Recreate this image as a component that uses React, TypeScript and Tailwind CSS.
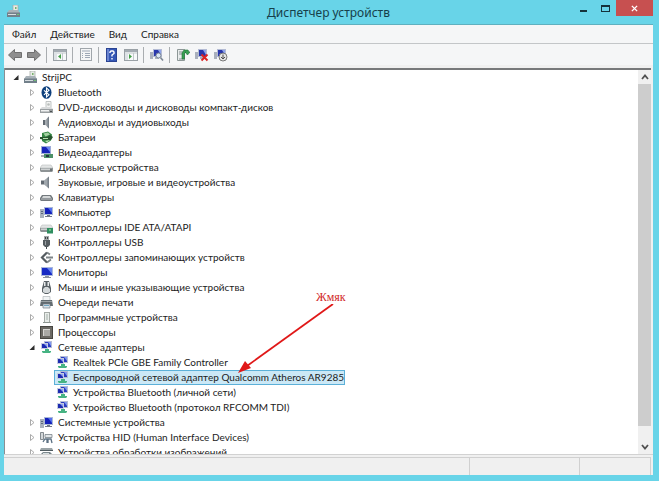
import React from "react";

type Kind =
  | "pc" | "bluetooth" | "optical" | "audio" | "battery" | "display" | "disk" | "speaker"
  | "keyboard" | "computer" | "ide" | "usb" | "storage" | "monitor" | "mouse" | "printer"
  | "software" | "cpu" | "network" | "hid" | "imaging";

function Drawing({ kind }: { kind: Kind }) {
  switch (kind) {
    case "pc":
      return (
        <g>
          <path d="M6 0h5v6H6z" fill="#e6ebe6" stroke="#a0a8a2" strokeWidth=".7" />
          <path d="M8 2h1.500v2H8z" fill="#79b06c" />
          <path d="M2 5h9l2 3H0z" fill="#a9b2b8" />
          <path d="M0 7.500h13V12H0z" fill="#72808a" />
          <path d="M1 9h8v1H1z" fill="#d7dde0" />
          <path d="M10 9h2v1h-2z" fill="#6fc373" />
        </g>
      );
    case "bluetooth":
      return (
        <g>
          <ellipse cx="6.500" cy="6.500" rx="5" ry="6.300" fill="#0d3f7c" />
          <path d="M4 4.300l5 4.500-2.500 2.200V2L9 4.200 4 8.800" fill="none" stroke="#fff" strokeWidth="1.100" />
        </g>
      );
    case "optical":
      return (
        <g>
          <path d="M6 .5h5v6H6z" fill="#f2f3f2" stroke="#b3b7b8" strokeWidth=".8" />
          <circle cx="8.500" cy="3.500" r="1.300" fill="#b9bdbb" />
          <path d="M2 6h9l2 2H0z" fill="#d8dadb" />
          <path d="M0 8h13v4H0z" fill="#9a9fa1" />
          <path d="M1 9h8v1.500H1z" fill="#f0f1f1" />
          <path d="M10 10h2v1h-2z" fill="#4b5152" />
        </g>
      );
    case "audio":
    case "speaker":
      return (
        <g>
          <path d={kind === "audio" ? "M3 4h2.500v5H3z" : "M1 4.500h3v4H1z"} fill="#626a72" />
          <path d={kind === "audio" ? "M5.500 4L9 .5v12L5.500 9z" : "M4 4.500L9 .5v12l-5-4z"} fill="#a0a7ad" />
          <path d="M7.500 2L9 .5v12L7.500 11z" fill="#78818a" />
        </g>
      );
    case "battery":
      return (
        <g>
          <path d="M2 2l6-1.500 4 3-1 6-5 3-4-2.500z" fill="#348844" />
          <path d="M3.500 2.500l4.500-1 2 2-4.500 2z" fill="#a5d0a2" />
          <path d="M0 6h7l3-2 3 2-2 3H6L0 8z" fill="#28552f" />
          <path d="M3 7h5v1H3zM5 10l5-1-3 2.500z" fill="#b7e0b1" />
        </g>
      );
    case "display":
      return (
        <g>
          <rect x="1" y="0" width="10" height="8" fill="#9eabd6" />
          <rect x="2" y="1" width="8" height="6" fill="#1725b8" />
          <path d="M6 1h4v5z" fill="#6885ee" />
          <path d="M4 8h9v4H4z" fill="#4c9068" />
          <path d="M6 9h3v2H6z" fill="#263543" />
          <path d="M1 9h3v2H1z" fill="#a8adb5" />
        </g>
      );
    case "disk":
    case "ide":
      return (
        <g>
          <path d="M2 4h9l2 3H0z" fill="#e3e5e5" stroke="#b9bdbe" strokeWidth=".6" />
          <path d="M0 7h13v3l-1 1H1l-1-1z" fill="#8e9496" />
          <path d="M1 7.500h9V9H1z" fill="#cdd0d1" />
          {kind === "ide" ? <path d="M7 7h6v5.500H7z" fill="#2f8e60" /> : <path d="M10 8.500h2v1h-2z" fill="#4c5355" />}
          {kind === "ide" && <path d="M9 8h2v2H9z" fill="#6bbd82" />}
        </g>
      );
    case "keyboard":
      return (
        <g>
          <path d="M2 4h9l2 3v2l-1 1H1L0 9V7z" fill="#73797d" />
          <path d="M3 5h7l1 2H2z" fill="#d4d7d8" />
          <path d="M1 8h11" stroke="#b9bdc0" />
        </g>
      );
    case "computer":
      return (
        <g>
          <path d="M0 3h4v9H0z" fill="#aab2bd" />
          <path d="M1 5h2v1H1zM1 7h2v1H1z" fill="#5b6a80" />
          <rect x="4" y="1" width="9" height="8" fill="#aab8d7" />
          <rect x="5" y="2" width="7" height="6" fill="#1420ba" />
          <path d="M8 2h4v5z" fill="#536fec" />
          <path d="M7 9h3v1h2v1H5v-1h2z" fill="#717989" />
        </g>
      );
    case "usb":
      return (
        <g>
          <path d="M4 0h5v4H4z" fill="#a0a5a7" />
          <path d="M5 1h1v2H5zM7 1h1v2H7z" fill="#3e4344" />
          <path d="M3 4h7v5l-2 2H5L3 9z" fill="#555c60" />
          <path d="M5 5h1v4H5z" fill="#9ca2a5" />
          <path d="M6 11h1v2H6z" fill="#454c50" />
        </g>
      );
    case "storage":
      return (
        <g fill="none">
          <path d="M7 1.500l-5 5 5 5" stroke="#555c60" strokeWidth="2.200" />
          <path d="M7 1.500l3 2M7 11.500l4-3M6 6.500h7" stroke="#7d8487" strokeWidth="1.800" />
        </g>
      );
    case "monitor":
      return (
        <g>
          <rect x="1" y="1" width="12" height="9" fill="#aab7dc" />
          <rect x="2" y="2" width="10" height="7" fill="#172ac4" />
          <path d="M7 2h5v6z" fill="#6986ef" />
          <path d="M5 10h4v1h2v1H3v-1h2z" fill="#8b92a0" />
        </g>
      );
    case "mouse":
      return (
        <g>
          <path d="M4 0h5l2 7v4l-3 2H5l-3-2V7z" fill="#596166" />
          <path d="M5 6h3l2 2v3l-2 1H5l-2-1V8z" fill="#d3d8da" />
          <path d="M4 1h1.500v4H4zM7.500 1H9v4H7.500z" fill="#e6e9ea" />
        </g>
      );
    case "printer":
      return (
        <g>
          <path d="M3 .5h7V5H3z" fill="#f0f3f4" stroke="#a5abae" strokeWidth=".6" />
          <path d="M1 4h11l1 6H0z" fill="#626b70" />
          <path d="M1 5h11v1H1z" fill="#9aa1a4" />
          <path d="M3 8h7v4H3z" fill="#dbe4ea" stroke="#758087" strokeWidth=".7" />
          <path d="M4 9h5v1H4z" fill="#70a5c2" />
        </g>
      );
    case "software":
      return (
        <g>
          <rect x="4.500" y="1.500" width="5" height="10" fill="#e9edea" stroke="#a4aaa6" />
          <path d="M6.500 3h1v6h-1z" fill="#a4afa7" />
          <path d="M3 11h8v1H3z" fill="#8d9691" />
        </g>
      );
    case "cpu":
      return (
        <g>
          <rect x=".5" y=".5" width="12" height="12" fill="#6b6964" stroke="#474641" />
          <rect x="3" y="3" width="7" height="7" fill="#aaa9a5" />
          <path d="M3 3h7v1H4v6H3z" fill="#d6d5d1" />
        </g>
      );
    case "network":
      return (
        <g>
          <rect x="4.500" y=".5" width="7" height="6" fill="#2a3cc0" stroke="#b4bcd6" />
          <path d="M8 1h3v4z" fill="#7f97f0" />
          <rect x="1.500" y="2.500" width="6" height="5" fill="#1c2bb0" stroke="#c4cbe0" />
          <path d="M4 3h3v3z" fill="#8ea2f2" />
          <path d="M5 8h4v2h2v1l-1 1H3l-1-1v-1h3z" fill="#46b383" />
        </g>
      );
    case "hid":
      return (
        <g>
          <path d="M.5 1.500h3v7h-3z" fill="#d4d8da" stroke="#697277" strokeWidth=".8" />
          <path d="M5 3.500h7v3H5z" stroke="#7b848a" strokeWidth=".8" fill="#e3e7e9" />
          <path d="M3 11l2-3h2l0 4M8 12V8h3l1 4" fill="none" stroke="#5d7284" strokeWidth="1.300" />
        </g>
      );
    case "imaging":
      return (
        <g>
          <path d="M1 2h11l1 2H0z" fill="#9ba4a7" />
          <path d="M0 4h13v1H0z" fill="#4f5b60" />
          <path d="M3 6h7l3 3v3H0V9z" fill="#7b878c" />
          <path d="M3 7h6v2H3z" fill="#d7dfe1" />
        </g>
      );
  }
}

function Icon({ kind }: { kind: Kind }) {
  return (
    <svg className="size-[13px] shrink-0" viewBox="0 0 13 13" aria-hidden="true">
      <Drawing kind={kind} />
    </svg>
  );
}

function Toggle({ open, label }: { open: boolean; label: string }) {
  return (
    <button type="button" aria-expanded={open} aria-label={label} className="flex w-[11px] shrink-0 items-center">
      <svg className="h-[9px] w-[6px]" viewBox="0 0 6 9" aria-hidden="true">
        {open ? (
          <path d="M5.500 2v5H.5z" fill="#2c2c2c" />
        ) : (
          <path d="M1.500 1.500v6l3.500-3z" fill="#fff" stroke="#a2a2a2" strokeWidth=".9" />
        )}
      </svg>
    </button>
  );
}

const categories: { label: string; kind: Kind; devices?: string[] }[] = [
  { label: "Bluetooth", kind: "bluetooth" },
  { label: "DVD-дисководы и дисководы компакт-дисков", kind: "optical" },
  { label: "Аудиовходы и аудиовыходы", kind: "audio" },
  { label: "Батареи", kind: "battery" },
  { label: "Видеоадаптеры", kind: "display" },
  { label: "Дисковые устройства", kind: "disk" },
  { label: "Звуковые, игровые и видеоустройства", kind: "speaker" },
  { label: "Клавиатуры", kind: "keyboard" },
  { label: "Компьютер", kind: "computer" },
  { label: "Контроллеры IDE ATA/ATAPI", kind: "ide" },
  { label: "Контроллеры USB", kind: "usb" },
  { label: "Контроллеры запоминающих устройств", kind: "storage" },
  { label: "Мониторы", kind: "monitor" },
  { label: "Мыши и иные указывающие устройства", kind: "mouse" },
  { label: "Очереди печати", kind: "printer" },
  { label: "Программные устройства", kind: "software" },
  { label: "Процессоры", kind: "cpu" },
  {
    label: "Сетевые адаптеры",
    kind: "network",
    devices: [
      "Realtek PCIe GBE Family Controller",
      "Беспроводной сетевой адаптер Qualcomm Atheros AR9285",
      "Устройства Bluetooth (личной сети)",
      "Устройство Bluetooth (протокол RFCOMM TDI)",
    ],
  },
  { label: "Системные устройства", kind: "computer" },
  { label: "Устройства HID (Human Interface Devices)", kind: "hid" },
  { label: "Устройства обработки изображений", kind: "imaging" },
];

const selectedDevice = "Беспроводной сетевой адаптер Qualcomm Atheros AR9285";

function DeviceTree() {
  return (
    <ul className="whitespace-nowrap pl-2">
      <li>
        <div className="flex h-[15px] items-center">
          <Toggle open label="StrijPC" />
          <Icon kind="pc" />
          <span className="pl-[5px]">StrijPC</span>
        </div>
        <ul className="pl-4">
          {categories.map((category) => (
            <li key={category.label}>
              <div className="flex h-[15px] items-center">
                <Toggle open={!!category.devices} label={category.label} />
                <Icon kind={category.kind} />
                <span className="pl-[5px]">{category.label}</span>
              </div>
              {category.devices && (
                <ul className="pl-[25px]">
                  {category.devices.map((device) => (
                    <li
                      key={device}
                      className={
                        device === selectedDevice
                          ? "flex h-[15px] w-fit items-center border border-[#5cb0d8] bg-[#cbe8f6] pl-px"
                          : "flex h-[15px] w-fit items-center pl-[2px]"
                      }
                    >
                      <Icon kind="network" />
                      <span className="pl-1">{device}</span>
                    </li>
                  ))}
                </ul>
              )}
            </li>
          ))}
        </ul>
      </li>
    </ul>
  );
}

function ToolButton({ label, children }: { label: string; children: React.ReactNode }) {
  return (
    <button type="button" aria-label={label} className="h-[14px] w-[13px] shrink-0">
      <svg viewBox="0 0 14 14" className="h-[14px] w-[14px] max-w-none" aria-hidden="true">{children}</svg>
    </button>
  );
}

function Divider() {
  return <div className="h-4 w-px bg-[#a9adb0]" />;
}

function PanelDrawing() {
  return (
    <g>
      <rect x=".5" y="1.500" width="13" height="11" fill="#f7f9fa" stroke="#9aa1a6" />
      <path d="M1 2h12v2H1z" fill="#a4acb3" />
      <path d="M1 5h12M9.500 5v7" stroke="#c3c8cc" />
      <path d="M1 5h3v7H1z" fill="#dde2e6" />
    </g>
  );
}

function PcDrawing() {
  return (
    <g>
      <path d="M0 4h3v7H0z" fill="#a9b0bd" />
      <rect x="3.500" y="1.500" width="8" height="7" fill="#2937ac" stroke="#b3bbd4" />
      <path d="M8 2h3v5z" fill="#8ea3ea" />
      <path d="M5 9h4v2H5z" fill="#a9b0bd" />
    </g>
  );
}

function Toolbar() {
  return (
    <div className="flex h-[21px] shrink-0 items-center gap-[6px] bg-[#f5f6f7] pl-1" role="toolbar">
      <ToolButton label="Назад">
        <path d="M.5 7l6-5.500v3h7v5h-7v3z" fill="#8e8e8e" stroke="#6f6f6f" />
      </ToolButton>
      <ToolButton label="Вперёд">
        <path d="M13.500 7l-6-5.500v3h-7v5h7v3z" fill="#8e8e8e" stroke="#6f6f6f" />
      </ToolButton>
      <Divider />
      <ToolButton label="Дерево консоли">
        <PanelDrawing />
        <path d="M8 6v5L5 8.500z" fill="#43a047" />
      </ToolButton>
      <Divider />
      <ToolButton label="Свойства">
        <rect x="1.500" y=".5" width="11" height="12" fill="#f4f5f6" stroke="#a0a6ab" />
        <path d="M3 3h8M3 5.500h1M6 5.500h5M3 7.500h1M6 7.500h5M3 9.500h1M6 9.500h5" stroke="#9da7b5" />
      </ToolButton>
      <Divider />
      <ToolButton label="Справка">
        <rect x="1.500" y=".5" width="10" height="13" fill="#3557b5" stroke="#2a4393" />
        <path d="M2 1h2v12H2z" fill="#6883cf" />
        <path d="M5 5V4l1-1h2l1 1v1.500L7 7v1.500M7 10v1.500" fill="none" stroke="#fff" strokeWidth="1.400" />
      </ToolButton>
      <ToolButton label="Область действий">
        <PanelDrawing />
        <path d="M5 6v5l3-2.500z" fill="#43a047" />
      </ToolButton>
      <Divider />
      <ToolButton label="Обновить конфигурацию">
        <PcDrawing />
        <circle cx="8.500" cy="7.500" r="2.500" fill="#d9e6f5" stroke="#7b8694" />
        <path d="M10.500 9.500l2.500 3" stroke="#7b8694" strokeWidth="1.600" />
      </ToolButton>
      <Divider />
      <ToolButton label="Обновить драйверы">
        <path d="M1.500 1.500h7v11h-7z" fill="#e9ecec" stroke="#8d9797" />
        <path d="M3 4h4M3 6h3M3 11h5" stroke="#858f91" />
        <path d="M6 11V5l2-3h4l1 2h1l-2.500 3L9 4h1L8.500 5.500V11z" fill="#38a052" stroke="#22713a" strokeWidth=".6" />
      </ToolButton>
      <ToolButton label="Удалить">
        <PcDrawing />
        <path d="M6.500 6.500l6 6M12.500 6.500l-6 6" stroke="#dc2323" strokeWidth="1.900" />
      </ToolButton>
      <ToolButton label="Отключить">
        <PcDrawing />
        <circle cx="9" cy="9" r="4" fill="#e4e4e4" stroke="#7a7a7a" />
        <path d="M9 6.500v4M7 9l2 2 2-2" fill="none" stroke="#4d4d4d" />
      </ToolButton>
    </div>
  );
}

function ScrollBar() {
  return (
    <div className="flex w-[13px] shrink-0 flex-col border-t-2 border-[#77797b] bg-[#f0f0f0]">
      <button type="button" aria-label="Вверх" className="flex h-[14px] items-center justify-center">
        <svg viewBox="0 0 8 6" className="h-[6px] w-2"><path d="M1 5l3-3.500L7 5" fill="none" stroke="#505050" strokeWidth="1.800" /></svg>
      </button>
      <div className="flex-1">
        <div className="h-[96%] bg-[#cdcdcd]" />
      </div>
      <button type="button" aria-label="Вниз" className="flex h-[14px] items-center justify-center">
        <svg viewBox="0 0 8 6" className="h-[6px] w-2"><path d="M1 1l3 3.500L7 1" fill="none" stroke="#505050" strokeWidth="1.800" /></svg>
      </button>
    </div>
  );
}

export default function App() {
  return (
    <div className="flex h-screen flex-col bg-[#68d4e8] pb-[6px] pl-1 pr-[6px] font-['Lato','Noto_Sans',sans-serif] text-[10px] text-[#1b1b1b]">
      <header className="grid h-6 shrink-0 grid-cols-[1fr_auto_1fr]">
        <div className="pl-[3px] pt-[5px]">
          <Icon kind="pc" />
        </div>
        <h1 className="pt-1 font-['Noto_Sans',sans-serif] text-[12px] leading-[17px] text-[#16404a]">Диспетчер устройств</h1>
        <div className="flex h-4 justify-end">
          <button type="button" aria-label="Свернуть" className="flex w-[22px] items-end justify-center pb-1">
            <span className="h-[2px] w-[7px] bg-[#15323a]" />
          </button>
          <button type="button" aria-label="Развернуть" className="flex w-[22px] items-center justify-center">
            <span className="h-[7px] w-[9px] border border-t-2 border-[#15323a]" />
          </button>
          <button type="button" aria-label="Закрыть" className="flex w-[37px] items-center justify-center bg-[#c75050]">
            <svg viewBox="0 0 8 8" className="size-[7px]"><path d="M1 1l6 6M7 1L1 7" stroke="#fff" strokeWidth="1.600" /></svg>
          </button>
        </div>
      </header>

      <div className="flex min-h-0 flex-1 flex-col border-t border-[#5fb0bf] bg-[#f0f0f0]">
        <nav className="flex h-[19px] shrink-0 items-center gap-[14px] border-b border-[#c3c6c8] bg-[#f5f6f7] pl-2">
          <button type="button">Файл</button>
          <button type="button">Действие</button>
          <button type="button">Вид</button>
          <button type="button">Справка</button>
        </nav>
        <Toolbar />
        <main className="mr-[2px] mt-[3px] flex min-h-0 flex-1 border-l border-[#8b8f92] bg-white">
          <div className="relative min-w-0 flex-1 overflow-hidden border-t-2 border-[#77797b] leading-[15px]">
            <DeviceTree />
            <div className="pointer-events-none absolute left-[232px] top-[220px]">
              <p className="pl-[79px] font-['Liberation_Serif',serif] text-[12px] leading-[14px] text-[#d22a2a]">Жмяк</p>
              <svg className="h-[72px] w-[98px]" viewBox="0 0 98 72" aria-hidden="true">
                <path d="M96 0L10 62" stroke="#e01818" strokeWidth="1.800" />
                <path d="M1 69l7-12 6 7z" fill="#e01818" />
              </svg>
            </div>
          </div>
          <ScrollBar />
        </main>
        <footer className="flex h-[21px] shrink-0 border-t border-[#d2d2d2] pr-[2px] pt-[2px]">
          <div className="flex-1 border-r border-t border-[#d0d0d0]" />
          <div className="w-[17%] border-r border-t border-[#d0d0d0]" />
          <div className="w-[11%] border-r border-t border-[#d0d0d0]" />
        </footer>
      </div>
    </div>
  );
}
